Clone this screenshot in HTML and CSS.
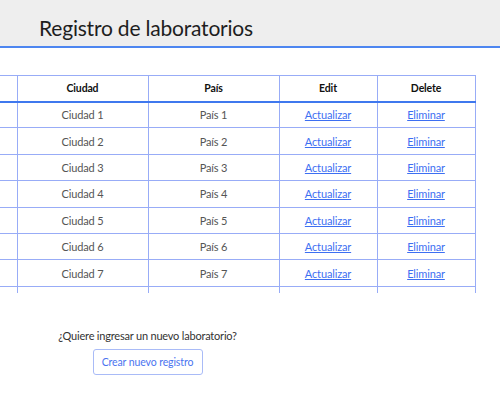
FILE: index.html
```html
<!DOCTYPE html>
<html lang="es">
<head>
<meta charset="utf-8">
<title>Registro de laboratorios</title>
<link rel="stylesheet" href="styles.css">
</head>
<body>
<header class="topbar">
  <h1 class="title">Registro de laboratorios</h1>
</header>
<main class="content">
  <div class="table-wrap">
    <table class="grid">
      <colgroup>
        <col class="c-id"><col class="c-wide"><col class="c-wide"><col class="c-narrow"><col class="c-narrow">
      </colgroup>
      <thead>
        <tr><th class="cut"></th><th>Ciudad</th><th>País</th><th>Edit</th><th>Delete</th></tr>
      </thead>
      <tbody>
        <tr><td class="cut"></td><td>Ciudad 1</td><td>País 1</td><td><a href="#">Actualizar</a></td><td><a href="#">Eliminar</a></td></tr>
        <tr><td class="cut"></td><td>Ciudad 2</td><td>País 2</td><td><a href="#">Actualizar</a></td><td><a href="#">Eliminar</a></td></tr>
        <tr><td class="cut"></td><td>Ciudad 3</td><td>País 3</td><td><a href="#">Actualizar</a></td><td><a href="#">Eliminar</a></td></tr>
        <tr><td class="cut"></td><td>Ciudad 4</td><td>País 4</td><td><a href="#">Actualizar</a></td><td><a href="#">Eliminar</a></td></tr>
        <tr><td class="cut"></td><td>Ciudad 5</td><td>País 5</td><td><a href="#">Actualizar</a></td><td><a href="#">Eliminar</a></td></tr>
        <tr><td class="cut"></td><td>Ciudad 6</td><td>País 6</td><td><a href="#">Actualizar</a></td><td><a href="#">Eliminar</a></td></tr>
        <tr><td class="cut"></td><td>Ciudad 7</td><td>País 7</td><td><a href="#">Actualizar</a></td><td><a href="#">Eliminar</a></td></tr>
        <tr class="clipped"><td class="cut"></td><td></td><td></td><td></td><td></td></tr>
      </tbody>
    </table>
  </div>
  <section class="create">
    <p class="prompt">¿Quiere ingresar un nuevo laboratorio?</p>
    <button class="btn" type="button">Crear nuevo registro</button>
  </section>
</main>
</body>
</html>
```
FILE: styles.css
```css
* { box-sizing: border-box; }
html, body { margin: 0; padding: 0; background: #fff; }
body {
  font-family: Lato, "Noto Sans", sans-serif;
  color: #555;
  font-size: 11px;
  letter-spacing: -0.15px;
}
.topbar {
  height: 48px;
  background: #eeeeee;
  border-bottom: 2px solid #4d86f0;
  display: flex;
  align-items: center;
  padding-left: 39px;
}
.title {
  margin: 0;
  font-size: 21px;
  font-weight: 400;
  color: #1e1e1e;
  letter-spacing: -0.2px;
  padding-top: 8px;
}
.content { padding-top: 27px; }
.table-wrap {
  height: 218px;
  overflow: hidden;
}
.grid {
  border-collapse: collapse;
  table-layout: fixed;
  width: 475px;
}
.c-id { width: 17px; }
.c-wide { width: 131px; }
.c-narrow { width: 98px; }
.grid th, .grid td {
  border: 1px solid #98acf7;
  text-align: center;
  padding: 0;
  height: 26.4px;
}
.grid th {
  color: #111;
  font-weight: 700;
  font-size: 10.5px;
  height: 26px;
  border-bottom: 2px solid #3f78ee;
}
.grid .cut { border-left: none; }
.grid a {
  color: #3d6ff2;
  text-decoration: underline;
}
.create {
  width: 295px;
  display: flex;
  flex-direction: column;
  align-items: center;
  padding-top: 36px;
}
.prompt {
  margin: 0 0 7px;
  color: #333;
  font-size: 11px;
  letter-spacing: -0.2px;
}
.btn {
  font-family: inherit;
  font-size: 10.5px;
  letter-spacing: -0.1px;
  color: #4a74f0;
  background: #fff;
  border: 1px solid #a9bbf7;
  border-radius: 3px;
  width: 110px;
  height: 26px;
  padding: 0;
}
```
